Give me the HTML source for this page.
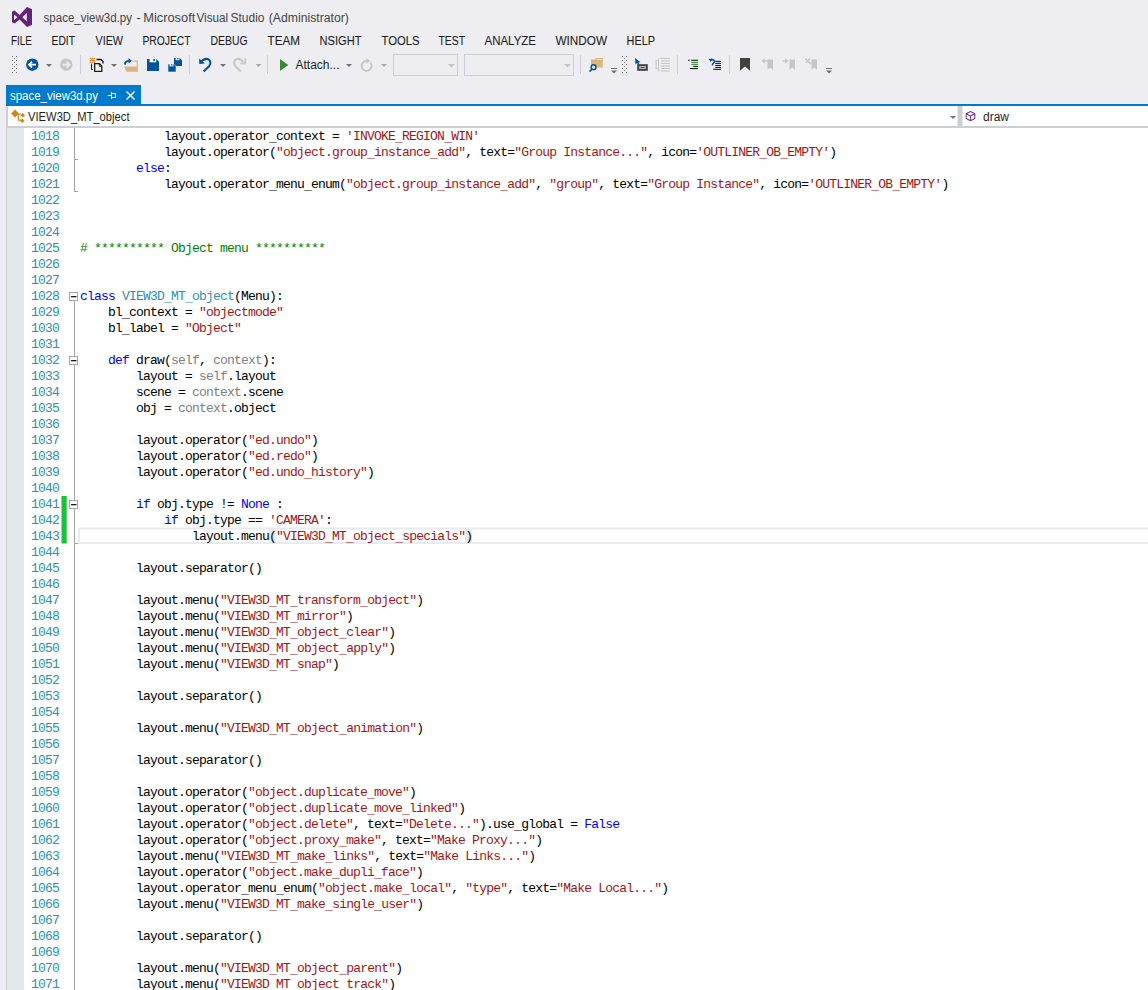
<!DOCTYPE html>
<html><head><meta charset="utf-8">
<style>
*{margin:0;padding:0;box-sizing:border-box}
html,body{width:1148px;height:990px;overflow:hidden;background:#eeeef2;font-family:"Liberation Sans",sans-serif;position:relative}
.a{position:absolute}
.title{left:44px;top:10px;font-size:12.5px;color:#444;white-space:nowrap}
.menu{top:33px;font-size:12px;color:#1e1e1e;white-space:nowrap}
#tab{left:6px;top:85px;width:135px;height:21px;background:#007acc}
#tabline{left:6px;top:104px;width:1142px;height:2px;background:#007acc}
#tabtxt{left:10px;top:88px;font-size:12.5px;color:#fff;white-space:nowrap}
#nav{left:6px;top:106px;width:1142px;height:22px;background:#fff;border-left:2px solid #cccedb;border-bottom:2px solid #cccedb}
#navsep{left:956px;top:106px;width:6px;height:20px;background:#cccedb}
.navtxt{top:109px;font-size:12.5px;color:#1e1e1e;white-space:nowrap}
#ed{left:6px;top:128px;width:1142px;height:862px;background:#fff;border-left:1px solid #cccedb}
#mg{left:7px;top:128px;width:17px;height:862px;background:#e6e7e8}
.ln{position:absolute;left:31px;width:28px;height:16px;line-height:16px;font-family:"Liberation Mono",monospace;font-size:13px;letter-spacing:-0.8px;color:#2b91af;text-align:right}
.cl i{font-style:normal;position:relative;top:1px}
.cl{position:absolute;left:80px;height:16px;line-height:16px;font-family:"Liberation Mono",monospace;font-size:13px;letter-spacing:-0.8px;color:#000;white-space:pre}
</style></head><body>
<!-- title bar -->
<svg class="a" style="left:0;top:0" width="1148" height="128" viewBox="0 0 1148 128">
<g font-family="Liberation Sans" >
<path d="M12 11.8 L14.6 10.6 L19.6 15 L27 7 L32 9.3 V24.8 L27 27 L19.6 19.4 L14.6 23.4 L12 22.2 Z M14 14.4 V20 L17.6 17.2 Z M22.4 17.2 L26.8 13 V21.4 Z" fill="#68217a" fill-rule="evenodd"/>
<g font-size="12.5" fill="#444"><text x="43.6" y="22.3" textLength="88.3" lengthAdjust="spacingAndGlyphs">space_view3d.py</text><text x="136.3" y="22.3" textLength="4.6" lengthAdjust="spacingAndGlyphs">-</text><text x="143.2" y="22.3" textLength="52.1" lengthAdjust="spacingAndGlyphs">Microsoft</text><text x="196.4" y="22.3" textLength="31.8" lengthAdjust="spacingAndGlyphs">Visual</text><text x="230.5" y="22.3" textLength="34.0" lengthAdjust="spacingAndGlyphs">Studio</text><text x="268.8" y="22.3" textLength="80.0" lengthAdjust="spacingAndGlyphs">(Administrator)</text></g>
<g font-size="12" fill="#1e1e1e" stroke="#1e1e1e" stroke-width="0.1">
<text x="11" y="45" textLength="21" lengthAdjust="spacingAndGlyphs">FILE</text>
<text x="51.5" y="45" textLength="23.5" lengthAdjust="spacingAndGlyphs">EDIT</text>
<text x="95.5" y="45" textLength="27.5" lengthAdjust="spacingAndGlyphs">VIEW</text>
<text x="142.5" y="45" textLength="48" lengthAdjust="spacingAndGlyphs">PROJECT</text>
<text x="210.5" y="45" textLength="37" lengthAdjust="spacingAndGlyphs">DEBUG</text>
<text x="267.5" y="45" textLength="32.5" lengthAdjust="spacingAndGlyphs">TEAM</text>
<text x="319.5" y="45" textLength="42" lengthAdjust="spacingAndGlyphs">NSIGHT</text>
<text x="381.5" y="45" textLength="38" lengthAdjust="spacingAndGlyphs">TOOLS</text>
<text x="438.5" y="45" textLength="26.5" lengthAdjust="spacingAndGlyphs">TEST</text>
<text x="484.5" y="45" textLength="51.5" lengthAdjust="spacingAndGlyphs">ANALYZE</text>
<text x="555.5" y="45" textLength="51.5" lengthAdjust="spacingAndGlyphs">WINDOW</text>
<text x="626.5" y="45" textLength="28.5" lengthAdjust="spacingAndGlyphs">HELP</text>
</g>
<!-- toolbar -->
<g fill="#7a7a7a"><rect x="12" y="56" width="1" height="1"/><rect x="16" y="56" width="1" height="1"/><rect x="12" y="60" width="1" height="1"/><rect x="16" y="60" width="1" height="1"/><rect x="12" y="64" width="1" height="1"/><rect x="16" y="64" width="1" height="1"/><rect x="12" y="68" width="1" height="1"/><rect x="16" y="68" width="1" height="1"/><rect x="12" y="72" width="1" height="1"/><rect x="16" y="72" width="1" height="1"/><rect x="14" y="58" width="1" height="1"/><rect x="14" y="62" width="1" height="1"/><rect x="14" y="66" width="1" height="1"/><rect x="14" y="70" width="1" height="1"/><rect x="622" y="56" width="1" height="1"/><rect x="626" y="56" width="1" height="1"/><rect x="622" y="60" width="1" height="1"/><rect x="626" y="60" width="1" height="1"/><rect x="622" y="64" width="1" height="1"/><rect x="626" y="64" width="1" height="1"/><rect x="622" y="68" width="1" height="1"/><rect x="626" y="68" width="1" height="1"/><rect x="622" y="72" width="1" height="1"/><rect x="626" y="72" width="1" height="1"/><rect x="624" y="58" width="1" height="1"/><rect x="624" y="62" width="1" height="1"/><rect x="624" y="66" width="1" height="1"/><rect x="624" y="70" width="1" height="1"/></g>
<!-- back/forward -->
<circle cx="32.3" cy="64.7" r="6.2" fill="#00539c"/>
<path d="M29 64.7 H36 M32 61.7 L29 64.7 L32 67.7" stroke="#fff" stroke-width="1.8" fill="none"/>
<circle cx="66.3" cy="64.7" r="6.2" fill="#c6c6c6"/>
<path d="M62.5 64.7 H69.5 M66.5 61.7 L69.5 64.7 L66.5 67.7" stroke="#eeeef2" stroke-width="1.8" fill="none"/>
<!-- dropdown arrows -->
<g fill="#717171">
<path d="M46 64 H52 L49 67 Z"/>
<path d="M111 64 H117 L114 67 Z"/>
<path d="M220 64 H226 L223 67 Z"/>
<path d="M346 64 H352 L349 67 Z"/>
</g>
<g fill="#a8a8a8">
<path d="M255.5 64 H261.5 L258.5 67 Z"/>
<path d="M381 64 H387 L384 67 Z"/>
</g>
<!-- separators -->
<g fill="#ccced8">
<rect x="80" y="55" width="1" height="19"/>
<rect x="189" y="55" width="1" height="19"/>
<rect x="267" y="55" width="1" height="19"/>
<rect x="580" y="55" width="1" height="19"/>
<rect x="677" y="55" width="1" height="19"/>
<rect x="729" y="55" width="1" height="19"/>
</g>
<!-- new project -->
<g fill="#e07a1b">
<rect x="89.8" y="57.8" width="1.2" height="1.2"/><rect x="93.8" y="57.8" width="1.2" height="1.2"/>
<rect x="91.8" y="57.8" width="1.2" height="1.2"/>
<rect x="90.8" y="58.9" width="3.2" height="2.8" fill="#f0a45a"/>
<rect x="89.8" y="59.8" width="1.2" height="1.2"/><rect x="93.8" y="59.8" width="1.2" height="1.2"/>
<rect x="89.8" y="61.8" width="1.2" height="1.2"/><rect x="91.8" y="61.8" width="1.2" height="1.2"/><rect x="93.8" y="61.8" width="1.2" height="1.2"/>
</g>
<path d="M96.5 59.5 H101 L103 61.5 V63.5" stroke="#1e1e1e" stroke-width="1.4" fill="none"/>
<path d="M91.5 63.7 V69.6 H92.8" stroke="#1e1e1e" stroke-width="1" fill="none"/>
<path d="M94.7 63.7 H99.5 L101.8 66 V71.3 H94.7 Z" fill="#f6f6f6" stroke="#1e1e1e" stroke-width="1.3"/>
<path d="M99.3 63.7 V66.2 H101.8" stroke="#1e1e1e" stroke-width="1" fill="none"/>
<!-- open -->
<path d="M132.6 61.2 H137.2 V71.8" stroke="#dcb67a" stroke-width="1.2" fill="none"/>
<path d="M124.3 66.4 H137.7 V71.8 H126.3 Z" fill="#dcb67a"/>
<path d="M125.6 64.6 C124 62.6 126.5 60.8 129.5 60.8" stroke="#00539c" stroke-width="1.8" fill="none"/>
<path d="M128.6 58 L131.8 60.8 L128.6 63.6 Z" fill="#00539c"/>
<!-- save -->
<path d="M147 59 H156.2 L159 61.8 V71 H147 Z" fill="#00539c"/><rect x="149.6" y="59" width="6.6" height="3.3" fill="#fff"/>
<rect x="153.3" y="59" width="1.6" height="2" fill="#00539c"/>
<!-- save all -->
<path d="M174 58 H179.7 L182 60.3 V66 H174 Z" fill="#00539c"/>
<rect x="175.6" y="58" width="3.8" height="2.2" fill="#fff"/><rect x="177.3" y="58" width="1.1" height="1.5" fill="#00539c"/>
<path d="M168 64 H173.7 L176 66.3 V72 H168 Z" fill="#00539c" stroke="#eeeef2" stroke-width="0.6"/>
<rect x="169.6" y="64.2" width="3.8" height="2.2" fill="#fff"/><rect x="171.3" y="64.2" width="1.1" height="1.5" fill="#00539c"/>
<!-- undo -->
<path d="M201.2 62 C203 59.5 205.5 58.6 207.5 59 C210.8 59.8 211.3 63.8 209 66.3 L203.6 71.5" stroke="#00539c" stroke-width="2.1" fill="none"/>
<path d="M199.2 58.4 V64 L204.9 63.4 Z" fill="#00539c"/>
<!-- redo gray -->
<path d="M243.3 62 C241.5 59.5 239 58.6 237 59 C233.7 59.8 233.2 63.8 235.5 66.3 L240.9 71.5" stroke="#c6c6c6" stroke-width="2.1" fill="none"/>
<path d="M240.3 63.3 H245.3 V58.4" stroke="#c6c6c6" stroke-width="1.8" fill="none"/>
<!-- play -->
<path d="M280 59 L288.3 65 L280 71 Z" fill="#388a34"/>
<text x="295.5" y="69.3" font-size="12" fill="#1e1e1e" textLength="44" lengthAdjust="spacingAndGlyphs">Attach...</text>
<!-- restart gray -->
<path d="M366.6 60.9 A5 5 0 1 0 370.3 62.5" stroke="#c6c6c6" stroke-width="1.8" fill="none"/>
<path d="M366.3 58 L370.3 60.9 L366.3 63.8 Z" fill="#c6c6c6"/>
<!-- combos -->
<rect x="393.5" y="54.5" width="64" height="21" fill="none" stroke="#ccced8"/>
<path d="M448 64 H455 L451.5 67.5 Z" fill="#c2c3c9"/>
<rect x="464.5" y="54.5" width="109" height="21" fill="none" stroke="#ccced8"/>
<path d="M566 64 H573 L569.5 67.5 Z" fill="#c2c3c9" transform="translate(-2 0)"/>
<!-- find in files -->
<path d="M591 59.5 H595 L596 58 H602.8 V67.5 H591 Z" fill="#dcb67a"/>
<rect x="596.5" y="59" width="5.5" height="1" fill="#f0dcb8"/>
<circle cx="593.6" cy="67.2" r="2.4" fill="#eeeef2" stroke="#00539c" stroke-width="1.5"/>
<path d="M592 69 L589.6 71.6" stroke="#00539c" stroke-width="1.7"/>
<!-- overflow -->
<rect x="611" y="68" width="6" height="1" fill="#717171"/><path d="M611 70.5 H617 L614 73.5 Z" fill="#717171"/>
<rect x="826" y="68" width="6" height="1" fill="#717171"/><path d="M826 70.5 H832 L829 73.5 Z" fill="#717171"/>
<!-- go to / cursor rect icon -->
<rect x="637.2" y="64.2" width="10.6" height="6.6" fill="#424242"/>
<rect x="639.3" y="66.3" width="6.4" height="2.4" fill="#eeeef2"/>
<rect x="640.5" y="67" width="4" height="1" fill="#424242"/>
<path d="M635 58 L635.5 64.5 L637 63 L639 66 L640 65.5 L638.5 62.5 L640.5 62.3 Z" fill="#00539c"/>
<!-- gray tree icon -->
<g fill="#c6c6c6">
<rect x="655.6" y="60" width="1" height="9"/><rect x="655.6" y="60" width="3" height="1"/><rect x="655.6" y="68" width="3" height="1"/>
<rect x="658" y="58.5" width="1" height="13"/>
<rect x="660" y="58" width="10" height="1"/><rect x="661" y="60.5" width="9" height="1"/><rect x="661" y="63" width="9" height="1"/><rect x="661" y="65.5" width="9" height="1"/><rect x="661" y="68" width="9" height="1"/><rect x="661" y="70.5" width="9" height="1"/>
</g>
<!-- comment/uncomment-like icons -->
<g fill="#1e1e1e">
<rect x="688" y="59.7" width="1.5" height="1.1"/><rect x="691.3" y="59.7" width="6.7" height="1.1"/>
<rect x="691.3" y="61.8" width="6.7" height="1.1" fill="#388a34"/>
<rect x="691.3" y="63.8" width="6.7" height="1.1" fill="#388a34"/>
<rect x="693.3" y="65.9" width="4.7" height="1.1"/>
<rect x="690" y="68" width="8" height="1.1"/>
</g>
<g fill="#1e1e1e">
<rect x="715.3" y="60.8" width="5.7" height="1.1"/>
<rect x="715.3" y="62.8" width="5.7" height="1.1"/>
<rect x="715.3" y="64.9" width="5.7" height="1.1"/>
<rect x="715.3" y="66.9" width="5.7" height="1.1"/>
<rect x="713.2" y="68.8" width="7.8" height="1.1"/>
<path d="M710.5 60.3 C713 58.8 715.5 60.5 714 62.5 C713.3 63.5 712.5 64 712.3 65.3" stroke="#00539c" stroke-width="1.6" fill="none"/>
<path d="M708.6 59 L712 58.6 L710.6 62 Z" fill="#00539c"/>
</g>
<!-- bookmarks -->
<path d="M740 58 H750 V70.7 L745 66.5 L740 70.7 Z" fill="#424242"/>
<g fill="#c6c6c6">
<path d="M767.5 59.6 H773 V69.8 L770.2 67.5 L767.5 69.8 Z"/>
<path d="M761.5 61 L764.8 58.2 V60.2 H769 V61.8 H764.8 V63.8 Z"/>
<path d="M789.5 59.6 H795 V69.8 L792.2 67.5 L789.5 69.8 Z"/>
<path d="M788.5 61 L785.2 58.2 V60.2 H782.5 V61.8 H785.2 V63.8 Z"/>
<path d="M811.5 59.6 H817 V69.8 L814.2 67.5 L811.5 69.8 Z"/>
<path d="M805.3 58.6 L811 64.3 M810 58.6 L806 62.6" stroke="#c6c6c6" stroke-width="1.5"/>
</g>
<!-- tab -->
<rect x="6" y="85" width="135" height="21" fill="#007acc"/>
<rect x="6" y="104" width="1142" height="2" fill="#007acc"/>
<text x="10" y="100" font-size="12.5" fill="#fff" textLength="88" lengthAdjust="spacingAndGlyphs">space_view3d.py</text>
<path d="M107.8 95.5 H111.5 M111.5 92 V99 M111.5 93.5 H115.5 V97.5 H111.5" stroke="#fff" stroke-width="1" fill="none"/>
<path d="M126.5 91.5 L134.5 99.5 M134.5 91.5 L126.5 99.5" stroke="#fff" stroke-width="1.4"/>
<!-- nav -->
<rect x="6" y="106" width="2" height="22" fill="#ccced8"/>
<rect x="8" y="106" width="1140" height="20" fill="#fff"/>
<rect x="6" y="126" width="1142" height="2" fill="#ccced8"/>
<rect x="957.5" y="106" width="5" height="20" fill="#ccced8"/>
<path d="M950 116 H956 L953 119 Z" fill="#717171"/>
<g fill="#d0861c">
<path d="M15 109.6 L18.9 113.5 L15 117.4 L11.1 113.5 Z"/>
<path d="M22.7 113 L25 115.3 L22.7 117.6 L20.4 115.3 Z"/>
<path d="M22.3 118.4 L24.6 120.7 L22.3 123 L20 120.7 Z"/>
<path d="M17 114 H21 M18.3 114 V120.2 H21" stroke="#d0861c" stroke-width="1.2" fill="none"/>
</g>
<text x="28" y="121" font-size="12.5" fill="#1e1e1e" textLength="101.5" lengthAdjust="spacingAndGlyphs">VIEW3D_MT_object</text>
<path d="M970.5 111.5 L974.8 113.8 V118.6 L970.5 120.8 L966.2 118.6 V113.8 Z M966.2 113.8 L970.5 116 L974.8 113.8 M970.5 116 V120.8" stroke="#6f3ba0" stroke-width="1.1" fill="none" stroke-linejoin="round"/>
<text x="983" y="121.3" font-size="12.5" fill="#1e1e1e" textLength="26" lengthAdjust="spacingAndGlyphs">draw</text>
</g>
</svg>
<!-- editor -->
<div class="a" id="ed"></div>
<div class="a" id="mg"></div>
<svg class="a" style="left:0;top:128px" width="1148" height="862" viewBox="0 128 1148 862">
<g fill="#a5a5a5">
<rect x="74" y="128" width="1" height="64"/><rect x="74" y="159" width="4" height="1"/><rect x="74" y="191" width="4" height="1"/>
<rect x="74" y="301" width="1" height="689"/>
<rect x="74" y="543" width="4" height="1"/>
</g>
<g>
<rect x="69.5" y="292.5" width="8" height="8" fill="#fff" stroke="#a5a5a5"/><rect x="71" y="296" width="5.5" height="1.3" fill="#1e1e1e"/>
<rect x="69.5" y="356.5" width="8" height="8" fill="#fff" stroke="#a5a5a5"/><rect x="71" y="360" width="5.5" height="1.3" fill="#1e1e1e"/>
<rect x="69.5" y="500.5" width="8" height="8" fill="#fff" stroke="#a5a5a5"/><rect x="71" y="504" width="5.5" height="1.3" fill="#1e1e1e"/>
</g>
<rect x="61.5" y="496" width="5.2" height="47.5" fill="#1fbe3d"/>
<rect x="79" y="528.5" width="1080" height="14.5" fill="none" stroke="#eaeaf2" stroke-width="2"/>
<rect x="269" y="529" width="7" height="14" fill="#e9e9e9"/><rect x="465" y="529" width="7" height="14" fill="#e9e9e9"/>
</svg>
<div class="ln" style="top:129px">1018</div>
<div class="ln" style="top:145px">1019</div>
<div class="ln" style="top:161px">1020</div>
<div class="ln" style="top:177px">1021</div>
<div class="ln" style="top:193px">1022</div>
<div class="ln" style="top:209px">1023</div>
<div class="ln" style="top:225px">1024</div>
<div class="ln" style="top:241px">1025</div>
<div class="ln" style="top:257px">1026</div>
<div class="ln" style="top:273px">1027</div>
<div class="ln" style="top:289px">1028</div>
<div class="ln" style="top:305px">1029</div>
<div class="ln" style="top:321px">1030</div>
<div class="ln" style="top:337px">1031</div>
<div class="ln" style="top:353px">1032</div>
<div class="ln" style="top:369px">1033</div>
<div class="ln" style="top:385px">1034</div>
<div class="ln" style="top:401px">1035</div>
<div class="ln" style="top:417px">1036</div>
<div class="ln" style="top:433px">1037</div>
<div class="ln" style="top:449px">1038</div>
<div class="ln" style="top:465px">1039</div>
<div class="ln" style="top:481px">1040</div>
<div class="ln" style="top:497px">1041</div>
<div class="ln" style="top:513px">1042</div>
<div class="ln" style="top:529px">1043</div>
<div class="ln" style="top:545px">1044</div>
<div class="ln" style="top:561px">1045</div>
<div class="ln" style="top:577px">1046</div>
<div class="ln" style="top:593px">1047</div>
<div class="ln" style="top:609px">1048</div>
<div class="ln" style="top:625px">1049</div>
<div class="ln" style="top:641px">1050</div>
<div class="ln" style="top:657px">1051</div>
<div class="ln" style="top:673px">1052</div>
<div class="ln" style="top:689px">1053</div>
<div class="ln" style="top:705px">1054</div>
<div class="ln" style="top:721px">1055</div>
<div class="ln" style="top:737px">1056</div>
<div class="ln" style="top:753px">1057</div>
<div class="ln" style="top:769px">1058</div>
<div class="ln" style="top:785px">1059</div>
<div class="ln" style="top:801px">1060</div>
<div class="ln" style="top:817px">1061</div>
<div class="ln" style="top:833px">1062</div>
<div class="ln" style="top:849px">1063</div>
<div class="ln" style="top:865px">1064</div>
<div class="ln" style="top:881px">1065</div>
<div class="ln" style="top:897px">1066</div>
<div class="ln" style="top:913px">1067</div>
<div class="ln" style="top:929px">1068</div>
<div class="ln" style="top:945px">1069</div>
<div class="ln" style="top:961px">1070</div>
<div class="ln" style="top:977px">1071</div>
<div class="cl" style="top:129px">            layout.operator<i>_</i>context = <span style="color:#a31515">&#x27;INVOKE<i>_</i>REGION<i>_</i>WIN&#x27;</span></div>
<div class="cl" style="top:145px">            layout.operator(<span style="color:#a31515">&quot;object.group<i>_</i>instance<i>_</i>add&quot;</span>, text=<span style="color:#a31515">&quot;Group Instance...&quot;</span>, icon=<span style="color:#a31515">&#x27;OUTLINER<i>_</i>OB<i>_</i>EMPTY&#x27;</span>)</div>
<div class="cl" style="top:161px">        <span style="color:#0000ff">else</span>:</div>
<div class="cl" style="top:177px">            layout.operator<i>_</i>menu<i>_</i>enum(<span style="color:#a31515">&quot;object.group<i>_</i>instance<i>_</i>add&quot;</span>, <span style="color:#a31515">&quot;group&quot;</span>, text=<span style="color:#a31515">&quot;Group Instance&quot;</span>, icon=<span style="color:#a31515">&#x27;OUTLINER<i>_</i>OB<i>_</i>EMPTY&#x27;</span>)</div>
<div class="cl" style="top:241px"><span style="color:#008000"># ********** Object menu **********</span></div>
<div class="cl" style="top:289px"><span style="color:#0000ff">class</span> <span style="color:#2b91af">VIEW3D<i>_</i>MT<i>_</i>object</span>(Menu):</div>
<div class="cl" style="top:305px">    bl<i>_</i>context = <span style="color:#a31515">&quot;objectmode&quot;</span></div>
<div class="cl" style="top:321px">    bl<i>_</i>label = <span style="color:#a31515">&quot;Object&quot;</span></div>
<div class="cl" style="top:353px">    <span style="color:#0000ff">def</span> draw(<span style="color:#808080">self</span>, <span style="color:#808080">context</span>):</div>
<div class="cl" style="top:369px">        layout = <span style="color:#808080">self</span>.layout</div>
<div class="cl" style="top:385px">        scene = <span style="color:#808080">context</span>.scene</div>
<div class="cl" style="top:401px">        obj = <span style="color:#808080">context</span>.object</div>
<div class="cl" style="top:433px">        layout.operator(<span style="color:#a31515">&quot;ed.undo&quot;</span>)</div>
<div class="cl" style="top:449px">        layout.operator(<span style="color:#a31515">&quot;ed.redo&quot;</span>)</div>
<div class="cl" style="top:465px">        layout.operator(<span style="color:#a31515">&quot;ed.undo<i>_</i>history&quot;</span>)</div>
<div class="cl" style="top:497px">        <span style="color:#0000ff">if</span> obj.type != <span style="color:#0000ff">None</span> :</div>
<div class="cl" style="top:513px">            <span style="color:#0000ff">if</span> obj.type == <span style="color:#a31515">&#x27;CAMERA&#x27;</span>:</div>
<div class="cl" style="top:529px">                layout.menu(<span style="color:#a31515">&quot;VIEW3D<i>_</i>MT<i>_</i>object<i>_</i>specials&quot;</span>)</div>
<div class="cl" style="top:561px">        layout.separator()</div>
<div class="cl" style="top:593px">        layout.menu(<span style="color:#a31515">&quot;VIEW3D<i>_</i>MT<i>_</i>transform<i>_</i>object&quot;</span>)</div>
<div class="cl" style="top:609px">        layout.menu(<span style="color:#a31515">&quot;VIEW3D<i>_</i>MT<i>_</i>mirror&quot;</span>)</div>
<div class="cl" style="top:625px">        layout.menu(<span style="color:#a31515">&quot;VIEW3D<i>_</i>MT<i>_</i>object<i>_</i>clear&quot;</span>)</div>
<div class="cl" style="top:641px">        layout.menu(<span style="color:#a31515">&quot;VIEW3D<i>_</i>MT<i>_</i>object<i>_</i>apply&quot;</span>)</div>
<div class="cl" style="top:657px">        layout.menu(<span style="color:#a31515">&quot;VIEW3D<i>_</i>MT<i>_</i>snap&quot;</span>)</div>
<div class="cl" style="top:689px">        layout.separator()</div>
<div class="cl" style="top:721px">        layout.menu(<span style="color:#a31515">&quot;VIEW3D<i>_</i>MT<i>_</i>object<i>_</i>animation&quot;</span>)</div>
<div class="cl" style="top:753px">        layout.separator()</div>
<div class="cl" style="top:785px">        layout.operator(<span style="color:#a31515">&quot;object.duplicate<i>_</i>move&quot;</span>)</div>
<div class="cl" style="top:801px">        layout.operator(<span style="color:#a31515">&quot;object.duplicate<i>_</i>move<i>_</i>linked&quot;</span>)</div>
<div class="cl" style="top:817px">        layout.operator(<span style="color:#a31515">&quot;object.delete&quot;</span>, text=<span style="color:#a31515">&quot;Delete...&quot;</span>).use<i>_</i>global = <span style="color:#0000ff">False</span></div>
<div class="cl" style="top:833px">        layout.operator(<span style="color:#a31515">&quot;object.proxy<i>_</i>make&quot;</span>, text=<span style="color:#a31515">&quot;Make Proxy...&quot;</span>)</div>
<div class="cl" style="top:849px">        layout.menu(<span style="color:#a31515">&quot;VIEW3D<i>_</i>MT<i>_</i>make<i>_</i>links&quot;</span>, text=<span style="color:#a31515">&quot;Make Links...&quot;</span>)</div>
<div class="cl" style="top:865px">        layout.operator(<span style="color:#a31515">&quot;object.make<i>_</i>dupli<i>_</i>face&quot;</span>)</div>
<div class="cl" style="top:881px">        layout.operator<i>_</i>menu<i>_</i>enum(<span style="color:#a31515">&quot;object.make<i>_</i>local&quot;</span>, <span style="color:#a31515">&quot;type&quot;</span>, text=<span style="color:#a31515">&quot;Make Local...&quot;</span>)</div>
<div class="cl" style="top:897px">        layout.menu(<span style="color:#a31515">&quot;VIEW3D<i>_</i>MT<i>_</i>make<i>_</i>single<i>_</i>user&quot;</span>)</div>
<div class="cl" style="top:929px">        layout.separator()</div>
<div class="cl" style="top:961px">        layout.menu(<span style="color:#a31515">&quot;VIEW3D<i>_</i>MT<i>_</i>object<i>_</i>parent&quot;</span>)</div>
<div class="cl" style="top:977px">        layout.menu(<span style="color:#a31515">&quot;VIEW3D<i>_</i>MT<i>_</i>object<i>_</i>track&quot;</span>)</div>
</body></html>
